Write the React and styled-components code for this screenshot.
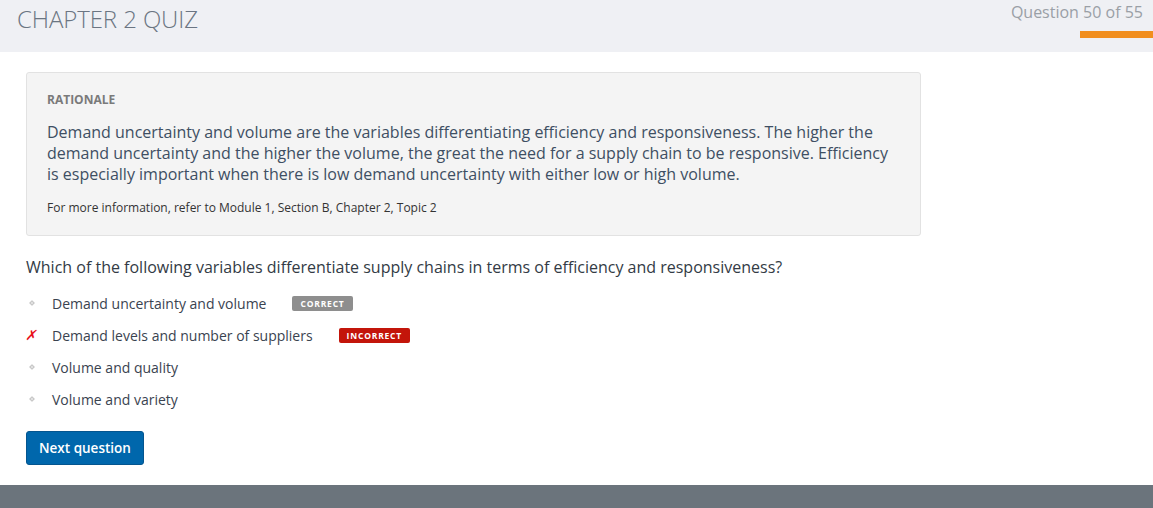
import React from "react";
import styled, { createGlobalStyle } from "styled-components";

const GlobalStyle = createGlobalStyle`
  *, *::before, *::after { box-sizing: border-box; }
  html, body {
    margin: 0;
    padding: 0;
    background: #ffffff;
    font-family: "Open Sans", "Liberation Sans", sans-serif;
    overflow: hidden;
  }
`;

// ***************************************************

const Page = styled.div`
  display: flex;
  flex-direction: column;
  height: 508px;
`;

const Header = styled.header`
  height: 52px;
  flex-shrink: 0;
  background-color: #eff0f4;
  display: flex;
  justify-content: space-between;
  align-items: flex-start;
`;

const QuizTitle = styled.h1`
  margin: 0;
  padding: 3px 0 0 17px;
  font-weight: 300;
  font-size: 24px;
  line-height: 32px;
  color: #6b7582;
  letter-spacing: -0.1px;
`;

const Progress = styled.div`
  display: flex;
  flex-direction: column;
  align-items: flex-end;
  padding-top: 2px;
`;

const ProgressLabel = styled.span`
  font-size: 16px;
  line-height: 20px;
  color: #9a9fa6;
  padding-right: 10px;
`;

const ProgressBar = styled.div`
  margin-top: 9px;
  width: 73px;
  height: 7px;
  background-color: #f18e1e;
`;

const Main = styled.main`
  padding: 20px 0 0 26px;
  flex: 1;
`;

const RationaleBox = styled.section`
  width: 895px;
  padding: 19px 20px;
  background-color: #f4f4f4;
  border: 1px solid #e2e2e2;
  border-radius: 3px;
`;

const RationaleLabel = styled.h4`
  margin: 0;
  font-size: 12px;
  line-height: 16px;
  font-weight: 700;
  color: #7a7a7a;
`;

const RationaleText = styled.p`
  margin: 14px 0 0;
  font-size: 16px;
  line-height: 21px;
  color: #3e4f63;
`;

const RationaleRef = styled.p`
  margin: 15px 0 0;
  font-size: 12px;
  line-height: 16px;
  color: #333;
`;

const QuestionText = styled.h3`
  margin: 20px 0 0;
  font-weight: 400;
  font-size: 16px;
  line-height: 22px;
  color: #333b45;
`;

const Options = styled.ul`
  list-style: none;
  margin: 9px 0 0;
  padding: 0;
`;

const Option = styled.li`
  height: 32px;
  display: flex;
  align-items: center;
`;

const Marker = styled.span`
  width: 26px;
  flex-shrink: 0;
  display: flex;
  align-items: center;
  padding-left: ${(p) => (p.$wrong ? "0" : "4px")};
`;

const Diamond = styled.span`
  width: 4px;
  height: 4px;
  border: 1px solid #c4c4c4;
  background: #e4e4e4;
  transform: rotate(45deg);
`;

const Cross = styled.span`
  color: #e8101a;
  font-size: 14px;
  font-weight: 700;
  line-height: 1;
  font-family: "DejaVu Sans", sans-serif;
  transform: skewX(-12deg);
`;

const OptionText = styled.span`
  font-size: 14px;
  color: #3a4350;
`;

const Badge = styled.span`
  margin-left: 26px;
  display: inline-flex;
  align-items: center;
  height: 15px;
  padding: 0 8px;
  border-radius: 2px;
  font-size: 8.5px;
  font-weight: 700;
  letter-spacing: 0.8px;
  color: #fff;
  background-color: ${(p) => (p.$kind === "correct" ? "#8e8e8e" : "#c3150a")};
`;

const NextButton = styled.button`
  margin-top: 16px;
  height: 34px;
  padding: 0 12px;
  border: 1px solid #04558f;
  border-radius: 3px;
  background-color: #0067ac;
  color: #fff;
  font-family: "Open Sans", "Liberation Sans", sans-serif;
  font-weight: 600;
  font-size: 13.5px;
`;

const Footer = styled.footer`
  height: 23px;
  flex-shrink: 0;
  background-color: #6b747c;
`;

// *****************************************************

const options = [
  { text: "Demand uncertainty and volume", badge: "correct" },
  { text: "Demand levels and number of suppliers", badge: "incorrect", wrong: true },
  { text: "Volume and quality" },
  { text: "Volume and variety" },
];

const App = () => {
  return (
    <>
      <GlobalStyle />
      <Page>
        <Header>
          <QuizTitle>CHAPTER 2 QUIZ</QuizTitle>
          <Progress>
            <ProgressLabel>Question 50 of 55</ProgressLabel>
            <ProgressBar />
          </Progress>
        </Header>

        <Main>
          <RationaleBox>
            <RationaleLabel>RATIONALE</RationaleLabel>
            <RationaleText>
              Demand uncertainty and volume are the variables differentiating
              efficiency and responsiveness. The higher the demand uncertainty
              and the higher the volume, the great the need for a supply chain
              to be responsive. Efficiency is especially important when there
              is low demand uncertainty with either low or high volume.
            </RationaleText>
            <RationaleRef>
              For more information, refer to Module 1, Section B, Chapter 2, Topic 2
            </RationaleRef>
          </RationaleBox>

          <QuestionText>
            Which of the following variables differentiate supply chains in
            terms of efficiency and responsiveness?
          </QuestionText>

          <Options>
            {options.map((o) => (
              <Option key={o.text}>
                <Marker $wrong={o.wrong}>
                  {o.wrong ? <Cross>✗</Cross> : <Diamond />}
                </Marker>
                <OptionText>{o.text}</OptionText>
                {o.badge && (
                  <Badge $kind={o.badge}>
                    {o.badge === "correct" ? "CORRECT" : "INCORRECT"}
                  </Badge>
                )}
              </Option>
            ))}
          </Options>

          <NextButton>Next question</NextButton>
        </Main>

        <Footer />
      </Page>
    </>
  );
};

export default App;
